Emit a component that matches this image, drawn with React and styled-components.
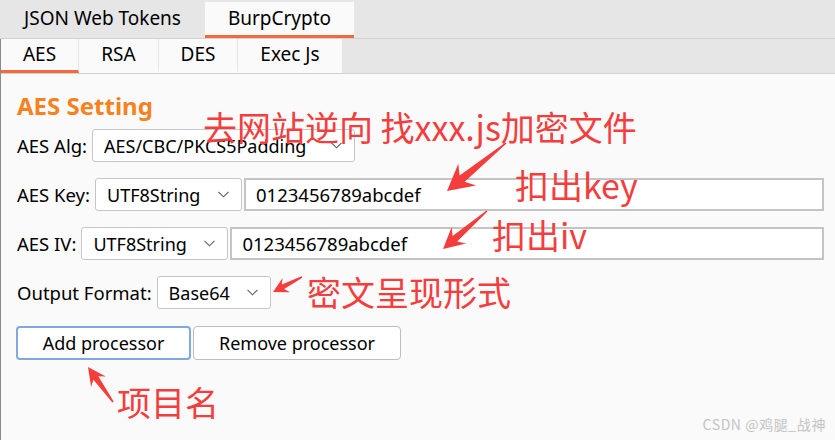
import React from 'react';
import styled, { createGlobalStyle } from 'styled-components';

const Global = createGlobalStyle`
  html, body { margin: 0; padding: 0; background: #fafafa; }
  body { font-family: "Noto Sans", "Noto Sans CJK SC", sans-serif; }
`;

const Page = styled.div`
  position: relative;
  display: flex;
  flex-direction: column;
  width: 835px;
  height: 440px;
  overflow: hidden;
  background: #fafafa;
  color: #000;
  font-family: "Noto Sans", "Noto Sans CJK SC", sans-serif;
  font-size: 18px;
`;

const TopBar = styled.div`
  display: flex;
  flex: none;
  box-sizing: border-box;
  height: 39px;
  padding-top: 2px;
  background: #e6e6e6;
  border-bottom: 1px solid #d2d2d2;
`;

const SubBar = styled.div`
  display: flex;
  box-sizing: border-box;
  height: 35px;
  background: #e6e6e6;
  border-bottom: 1px solid #d2d2d2;
`;

const Tab = styled.div`
  box-sizing: border-box;
  width: ${p => p.$w}px;
  display: flex;
  align-items: center;
  justify-content: center;
  background: ${p => (p.$filled || p.$active ? '#fafafa' : 'transparent')};
  border-bottom: 3px solid ${p => (p.$active ? '#f26a3c' : 'transparent')};
  border-right: ${p => (p.$sep ? '1px solid #e6e6e6' : 'none')};
  font-size: 19px;
  line-height: 1;
  white-space: nowrap;
`;

const Body = styled.div`
  flex: 1;
  border-left: 1px solid #8a8a8a;
`;

const Content = styled.div`
  display: flex;
  flex-direction: column;
  gap: 16px;
  padding: 19px 11px 0 16px;
`;

const Title = styled.div`
  font-weight: 700;
  font-size: 24px;
  line-height: 26px;
  color: #f5821f;
  margin-bottom: -6px;
`;

const Row = styled.div`
  display: flex;
  align-items: center;
  height: 33px;
`;

const Label = styled.span`
  font-size: 18.5px;
  margin-right: 5px;
  white-space: nowrap;
`;

const Select = styled.div`
  box-sizing: border-box;
  width: ${p => p.$w}px;
  height: 33px;
  display: flex;
  align-items: center;
  padding: 0 12px 0 11px;
  background: #fff;
  border: 1px solid #c6c6c6;
  border-radius: 3px;
  font-size: 18px;
  white-space: nowrap;
`;

const Chevron = styled.svg`
  margin-left: auto;
  flex: none;
`;

const Input = styled.div`
  box-sizing: border-box;
  flex: 1;
  height: 33px;
  margin-left: 2px;
  display: flex;
  align-items: center;
  padding-left: 10px;
  background: #fff;
  border: 2px solid #c4c4c4;
  font-size: 18.5px;
`;

const Buttons = styled.div`
  display: flex;
  gap: 2px;
  margin: 1px 0 0 -1px;
`;

const Button = styled.button`
  box-sizing: border-box;
  width: ${p => p.$w}px;
  height: 34px;
  padding: 0;
  background: #fff;
  border: ${p => (p.$focused ? '2px solid #7eaadd' : '1px solid #bdbdbd')};
  border-radius: 4px;
  font-family: inherit;
  font-size: 18px;
  color: #000;
  white-space: nowrap;
`;

const Note = styled.div`
  position: absolute;
  left: ${p => p.$x}px;
  top: ${p => p.$y}px;
  color: #f43d3d;
  font-family: "Noto Sans CJK SC", "Noto Sans", sans-serif;
  font-size: 34px;
  line-height: 34px;
  white-space: nowrap;
`;

const Overlay = styled.svg`
  position: absolute;
  left: 0;
  top: 0;
  pointer-events: none;
`;

const Watermark = styled.div`
  position: absolute;
  right: 9px;
  bottom: 8px;
  color: #c4c4c4;
  font-family: "Noto Sans CJK SC", sans-serif;
  font-size: 14px;
  line-height: 16px;
  letter-spacing: 0.6px;
`;

function ChevronIcon() {
  return (
    <Chevron width="11" height="7" viewBox="0 0 11 7">
      <polyline points="0.5,0.8 5.5,5.8 10.5,0.8" fill="none" stroke="#606060" strokeWidth="1.1" />
    </Chevron>
  );
}

function arrow(x1, y1, x2, y2, h, w, s) {
  const dx = x2 - x1, dy = y2 - y1;
  const L = Math.hypot(dx, dy);
  const ux = dx / L, uy = dy / L;
  const nx = -uy, ny = ux;
  const P = (a, b) => `${(x1 + ux * a + nx * b).toFixed(1)},${(y1 + uy * a + ny * b).toFixed(1)}`;
  return [P(0, 0.8), P(L - h * 0.75, s), P(L - h, w), P(L, 0), P(L - h, -w), P(L - h * 0.75, -s), P(0, -0.8)].join(' ');
}

const arrows = [
  [506, 143, 447, 191, 26, 14, 4],
  [487, 211, 443, 249, 21, 11, 3.5],
  [302, 277, 273, 292, 15, 8, 2.5],
  [113, 402, 88, 367, 18, 9, 3],
];

export default function App() {
  return (
    <Page>
      <Global />
      <TopBar>
        <Tab $w={205}>JSON Web Tokens</Tab>
        <Tab $w={149} $active>BurpCrypto</Tab>
      </TopBar>
      <Body>
        <SubBar>
          <Tab $w={78} $filled $active $sep>AES</Tab>
          <Tab $w={80} $filled $sep>RSA</Tab>
          <Tab $w={79} $filled $sep>DES</Tab>
          <Tab $w={104} $filled>Exec Js</Tab>
        </SubBar>
        <Content>
          <Title>AES Setting</Title>
          <Row>
            <Label>AES Alg:</Label>
            <Select $w={263}>AES/CBC/PKCS5Padding<ChevronIcon /></Select>
          </Row>
          <Row>
            <Label>AES Key:</Label>
            <Select $w={147}>UTF8String<ChevronIcon /></Select>
            <Input>0123456789abcdef</Input>
          </Row>
          <Row>
            <Label>AES IV:</Label>
            <Select $w={147}>UTF8String<ChevronIcon /></Select>
            <Input>0123456789abcdef</Input>
          </Row>
          <Row>
            <Label>Output Format:</Label>
            <Select $w={114}>Base64<ChevronIcon /></Select>
          </Row>
          <Buttons>
            <Button $focused $w={175}>Add processor</Button>
            <Button $w={208}>Remove processor</Button>
          </Buttons>
        </Content>
      </Body>

      <Note $x={203} $y={110}>去网站逆向 找xxx.js加密文件</Note>
      <Note $x={515} $y={168}>扣出key</Note>
      <Note $x={492} $y={218}>扣出iv</Note>
      <Note $x={307} $y={275}>密文呈现形式</Note>
      <Note $x={117} $y={385}>项目名</Note>

      <Overlay width="835" height="440" viewBox="0 0 835 440">
        {arrows.map((a, i) => (
          <polygon key={i} points={arrow(...a)} fill="#f43d3d" />
        ))}
      </Overlay>

      <Watermark>CSDN @鸡腿_战神</Watermark>
    </Page>
  );
}
